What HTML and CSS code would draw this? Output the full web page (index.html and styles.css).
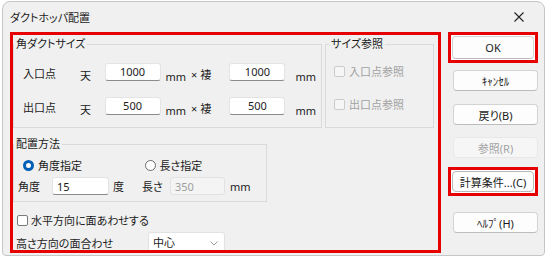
FILE: index.html
```html
<!DOCTYPE html>
<html lang="ja">
<head>
  <meta charset="UTF-8">
  <title>ダクトホッパ配置</title>
  <link rel="stylesheet" href="styles.css">
</head>
<body>
  <div class="window">
    <div class="titlebar">
      <span class="title">ダクトホッパ配置</span>
      <svg class="close" width="10" height="10" viewBox="0 0 10 10">
        <path d="M0.5 0.5 L9.5 9.5 M9.5 0.5 L0.5 9.5" stroke="#222" stroke-width="1.1" fill="none"/>
      </svg>
    </div>

    <div class="content">
      <div class="main">
        <div class="top-row">
          <fieldset class="group size">
            <legend>角ダクトサイズ</legend>
            <div class="size-row first">
              <span class="pt">入口点</span>
              <span class="ten">天</span>
              <input type="text" class="num" value="1000">
              <span class="mm">mm</span>
              <span class="by">× 褄</span>
              <input type="text" class="num" value="1000">
              <span class="mm end">mm</span>
            </div>
            <div class="size-row">
              <span class="pt">出口点</span>
              <span class="ten">天</span>
              <input type="text" class="num" value="500">
              <span class="mm">mm</span>
              <span class="by">× 褄</span>
              <input type="text" class="num" value="500">
              <span class="mm end">mm</span>
            </div>
          </fieldset>

          <fieldset class="group ref">
            <legend>サイズ参照</legend>
            <label class="check off first"><span class="box"></span>入口点参照</label>
            <label class="check off"><span class="box"></span>出口点参照</label>
          </fieldset>
        </div>

        <fieldset class="group place">
          <legend>配置方法</legend>
          <div class="radio-row">
            <label class="radio on"><span class="dot"></span>角度指定</label>
            <label class="radio"><span class="dot"></span>長さ指定</label>
          </div>
          <div class="angle-row">
            <span class="a-lbl">角度</span>
            <input type="text" class="field" value="15">
            <span class="deg">度</span>
            <span class="len">長さ</span>
            <input type="text" class="field off" value="350" disabled>
            <span class="unit">mm</span>
          </div>
        </fieldset>

        <label class="check flat"><span class="box"></span>水平方向に面あわせする</label>

        <div class="align-row">
          <span class="h-lbl">高さ方向の面合わせ</span>
          <div class="select">
            <span>中心</span>
            <svg width="8" height="5" viewBox="0 0 8 5">
              <path d="M0.5 0.5 L4 4 L7.5 0.5" stroke="#9a9a9a" stroke-width="1" fill="none"/>
            </svg>
          </div>
        </div>
      </div>

      <div class="side">
        <div class="mark"><button class="btn">OK</button></div>
        <button class="btn plain cancel">ｷｬﾝｾﾙ</button>
        <button class="btn plain back">戻り(B)</button>
        <button class="btn plain refer" disabled>参照(R)</button>
        <div class="mark calc"><button class="btn">計算条件...(C)</button></div>
        <button class="btn plain help">ﾍﾙﾌﾟ(H)</button>
      </div>
    </div>
  </div>
</body>
</html>
```
FILE: styles.css
```css
* {
  box-sizing: border-box;
}

body {
  margin: 0;
  background: #fff;
  font-family: "Noto Sans", "Noto Sans CJK JP", sans-serif;
  font-size: 11px;
  color: #1b1b1b;
  font-feature-settings: "palt";
}

.window {
  margin: 1px 0 0 2px;
  width: 543px;
  height: 255px;
  background: #f0f0f0;
  border: 1px solid #c6c6c6;
  border-radius: 8px 8px 4px 4px;
}

.titlebar {
  height: 30px;
  display: flex;
  align-items: center;
  justify-content: space-between;
  padding: 0 20px 0 7px;
}

.content {
  display: flex;
  gap: 7px;
  padding-left: 7px;
}

/* red highlight frames */
.main {
  width: 431px;
  height: 221px;
  border: 3px solid #e60000;
  overflow: hidden;
}

.top-row {
  display: flex;
  gap: 3px;
  margin-top: 1px;
}

.group {
  margin: 0;
  padding: 0;
  min-width: 0;
  border: 1px solid #dadada;
}

.group legend {
  padding: 0 2px;
  line-height: 16px;
}

.size {
  width: 309px;
  height: 92px;
}

.ref {
  width: 109px;
  height: 92px;
}

.ref legend {
  margin-left: 3px;
}

.size-row {
  display: flex;
  align-items: flex-start;
  height: 18px;
  padding-left: 9px;
  margin-top: 16px;
  line-height: 18px;
}

.size-row.first {
  margin-top: 11px;
}

.pt {
  width: 58px;
  padding-top: 2px;
}

.ten {
  width: 25px;
  padding-top: 4px;
}

input {
  font: inherit;
  margin: 0;
  padding: 0 4px;
  background: #fff;
  border: 1px solid #e4e4e4;
  border-bottom-color: #8b8b8b;
  border-radius: 3px;
  color: #1b1b1b;
  outline: none;
}

.num {
  width: 56px;
  height: 18px;
  text-align: center;
}

.mm {
  width: 26px;
  margin-left: 5px;
  padding-top: 5px;
}

.mm.end {
  margin-left: 10px;
}

.by {
  width: 39px;
  padding-top: 3px;
}

.check {
  display: flex;
  align-items: center;
  gap: 4px;
  height: 18px;
}

.box {
  width: 11px;
  height: 11px;
  background: #fff;
  border: 1px solid #7a7a7a;
  border-radius: 2px;
}

.check.off {
  color: #a2a2a2;
  padding-left: 8px;
  margin-top: 15px;
}

.check.off.first {
  margin-top: 10px;
}

.check.off .box {
  background: #f6f6f6;
  border-color: #cbcbcb;
}

.place {
  width: 254px;
  height: 66px;
  margin-top: 8px;
}

.radio-row {
  display: flex;
  height: 18px;
  margin-top: 4px;
  padding-left: 9px;
}

.radio {
  display: flex;
  align-items: center;
  gap: 4px;
  width: 122px;
}

.dot {
  width: 11px;
  height: 11px;
  border: 1px solid #6a6a6a;
  border-radius: 50%;
  background: #fff;
}

.radio.on .dot {
  border: 3px solid #005fb8;
}

.angle-row {
  display: flex;
  align-items: center;
  height: 18px;
  margin-top: 3px;
  padding-left: 4px;
}

.a-lbl {
  width: 34px;
}

.field {
  height: 18px;
  width: 57px;
}

.field.off {
  width: 55px;
  background: #f4f4f4;
  border-color: #e2e2e2;
  color: #9d9d9d;
}

.deg {
  width: 29px;
  margin-left: 4px;
}

.len {
  width: 28px;
}

.unit {
  margin-left: 5px;
}

.check.flat {
  margin-top: 9px;
  padding-left: 4px;
  gap: 3px;
}

.align-row {
  display: flex;
  align-items: flex-start;
  margin-top: 3px;
  padding-left: 3px;
  line-height: 18px;
}

.h-lbl {
  width: 132px;
  padding-top: 3px;
}

.select {
  width: 77px;
  height: 24px;
  display: flex;
  align-items: flex-start;
  justify-content: space-between;
  padding: 1px 6px 0 4px;
  background: #fff;
  border: 1px solid #e2e2e2;
  border-radius: 3px;
}

.select svg {
  margin-top: 7px;
}

/* buttons column */
.side {
  width: 90px;
  display: flex;
  flex-direction: column;
}

.mark {
  border: 3px solid #e60000;
  background: #fff;
  padding: 1px;
  height: 31px;
}

.btn {
  font: inherit;
  color: #1b1b1b;
  width: 82px;
  height: 23px;
  padding: 0;
  background: #fdfdfd;
  border: 1px solid #d3d3d3;
  border-bottom-color: #bcbcbc;
  border-radius: 4px;
}

.btn.plain {
  width: 85px;
  height: 21px;
  margin-left: 5px;
}

.cancel {
  margin-top: 7px;
}

.back {
  margin-top: 13px;
}

.refer {
  margin-top: 12px;
}

.btn:disabled {
  background: #f6f6f6;
  border-color: #e8e8e8;
  color: #a3a3a3;
}

.mark.calc {
  margin-top: 9px;
  height: 29px;
}

.calc .btn {
  height: 21px;
  border-color: #b9b9b9;
}

.help {
  margin-top: 16px;
}
```
